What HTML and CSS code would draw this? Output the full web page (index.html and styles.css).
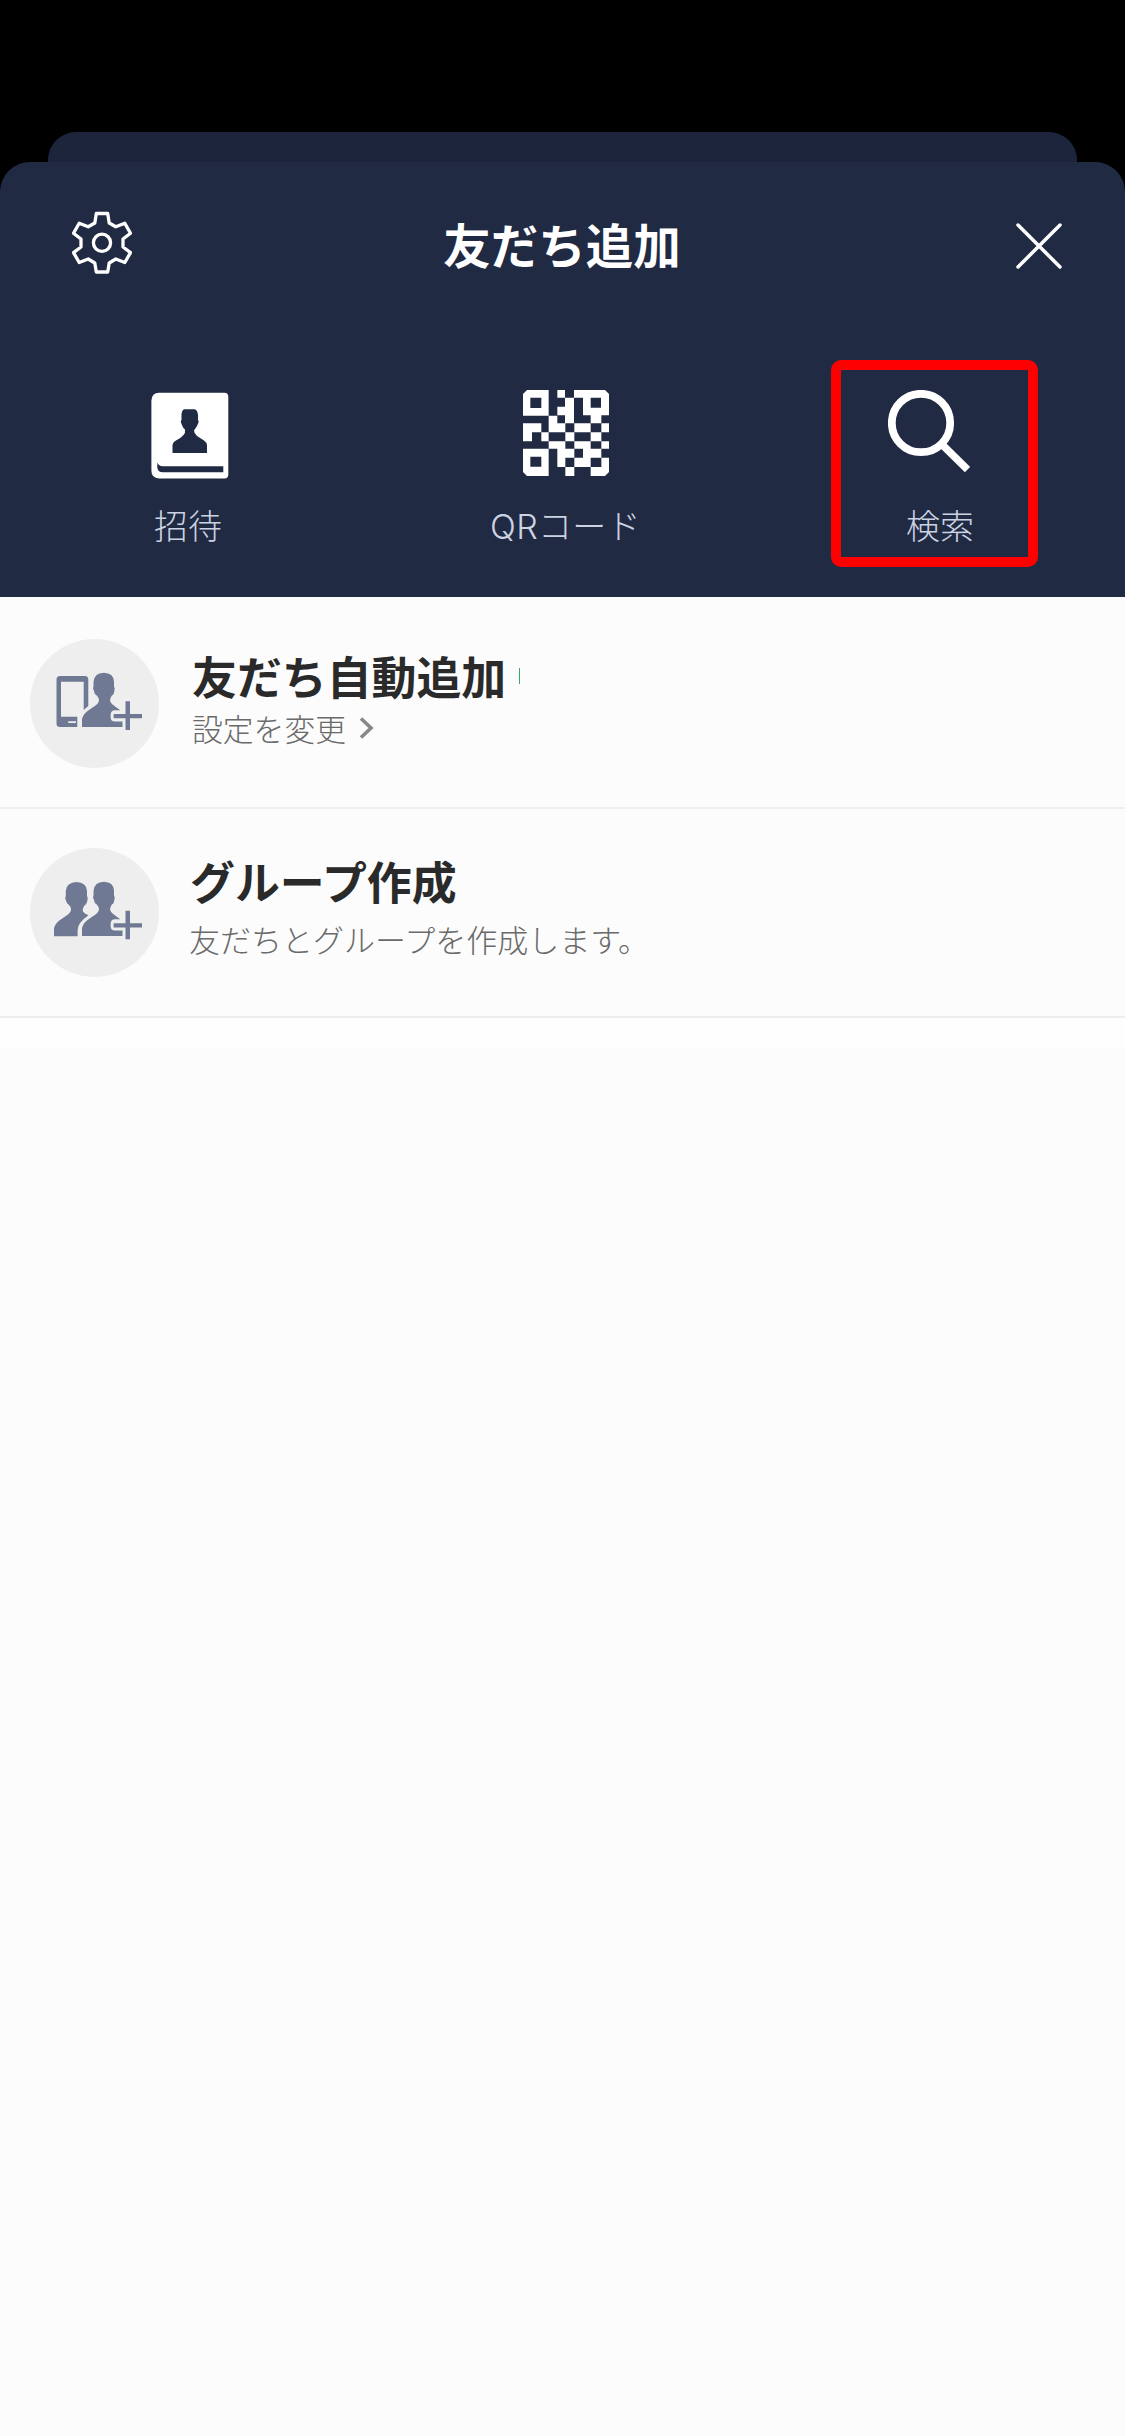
FILE: index.html
```
<!DOCTYPE html>
<html lang="ja">
<head>
<meta charset="utf-8">
<title>友だち追加</title>
<link rel="stylesheet" href="styles.css">
</head>
<body>
<div class="screen">
  <div class="back-sheet"></div>
  <main class="sheet">
    <header class="header">
      <div class="titlebar">
        <svg class="gear" width="60" height="64" viewBox="0 0 60 64" fill="none" stroke="#fff" stroke-width="3.300" stroke-linejoin="round">
          <path d="M24.3 3.5H35.7L37.2 13L43.8 16.8L52.8 13.2L58.5 23.2L51 29V37L58.5 42.6L52.8 52.5L43.8 49L37.2 53L35.7 62H24.3L22.8 53L16.2 49L7.2 52.5L1.5 42.6L9 37V29L1.5 23.2L7.2 13.2L16.2 16.8L22.8 13Z"/>
          <circle cx="30" cy="32.8" r="8.6"/>
        </svg>
        <h1 class="title">友だち追加</h1>
        <svg class="close" width="46" height="46" viewBox="0 0 46 46" stroke="#fff" stroke-width="3.500" stroke-linecap="round"><path d="M2 2L44 44M44 2L2 44"/></svg>
      </div>
      <nav class="actions">
        <div class="action invite">
          <svg class="action-icon" width="78" height="88" viewBox="0 0 78 88">
            <path fill="#fff" fill-rule="evenodd" d="M8 .8H73.500Q77.300.8 77.300 4.600V82.600Q77.300 86.500 73.500 86.500H8Q.4 86 .4 78.800V8.500Q.8 1 8 .8ZM33 17.300Q30.200 19 30.500 24.500V28Q29.400 28.500 30 30.500L30.900 33Q32 36 34 37.500Q34.600 41 32.500 43Q30 46 25 48.500Q21.500 50.500 21.500 53.500V61H56V53.500Q56 50.500 53 48.500L46 44Q43 41.500 43 38.500L46 34L47.500 30.500Q48 28.500 47 28V23Q46.500 17.800 43.500 17.300ZM6.300 70.500V75Q6.300 80.300 12 80.300H72.300V74.300H12Q7.500 74 6.300 70.500Z"/>
          </svg>
          <span class="label">招待</span>
        </div>
        <div class="action qr">
          <svg class="action-icon" width="86" height="86" viewBox="40 29 258 258" fill="#fff">
            <path fill-rule="evenodd" d="M52 29H117V106H40V41ZM62 52V83H95V52ZM40 205H117V287H52L40 275ZM62 229V259H95V229Z"/>
            <path fill-rule="evenodd" d="M193 29H286L298 41V105H275V129H243V105H220V52H193ZM243 52V82H274V52Z"/>
            <path d="M143 29H166V52H143ZM166 52H193V129H166V105H143V79H166ZM40 129H95V156H67V183H40ZM95 156H117V183H95ZM117 106H143V129H167V156H117ZM194 129H243V156H194ZM275 129H298V156H275ZM167 156H194V183H167ZM243 156H275V183H243ZM117 183H167V205H194V232H167V260H143V205H117ZM194 183H243V205H275V232H243V260H194V232H220V205H194ZM275 183H298V205H275ZM167 260H194V287H167ZM275 232H298V275L286 287H243V260H275Z"/>
          </svg>
          <span class="label">QRコード</span>
        </div>
        <div class="action search">
          <svg class="action-icon" width="82" height="84" viewBox="0 0 82 84" fill="none" stroke="#fff"><circle cx="33" cy="33" r="29.200" stroke-width="7.800"/><path stroke-width="7.400" d="M54 54.500L79.500 79.500"/></svg>
          <span class="label">検索</span>
        </div>
      </nav>
      <div class="highlight"></div>
    </header>
    <section class="list">
      <div class="row row-auto">
        <div class="avatar">
          <svg width="129" height="129" viewBox="0 0 129 129" fill="#6f7993">
            <path fill-rule="evenodd" d="M30 37H55Q58.300 37 58.300 40.500V67L53.700 71V42.700H31V77.700H47.300V88H30Q26.500 88 26.500 84.500V40.500Q26.500 37 30 37ZM39 82.300Q36.500 83 39 84H46V82.300Z"/>
            <path d="M73.800 33.700Q83.500 34 84 42.500V47.500Q85.300 49 84.300 52Q83.800 56 81.800 56.500Q79.800 59.500 80.200 62.500Q81.500 65.500 85.500 67.800L90.300 71.300H85Q80.600 71.300 80.600 76V78Q80.600 82.500 85 82.500H92.500V88H52V81Q52.300 76 57.500 72L65.500 66.500Q69.500 63.500 68.900 60.500Q68.500 58 66.700 56.500Q64.300 55.500 64 52Q62.300 49 63.500 47.500V43Q64 34 73.800 33.700Z"/>
            <path d="M95.500 62.300H100V75H112V79.200H100V91H95.500V79.200H83.600V75H95.500Z"/>
          </svg>
        </div>
        <div class="text">
          <h2 class="name">友だち自動追加<i class="marker"></i></h2>
          <p class="desc">設定を変更<svg class="chevron" width="16" height="22" viewBox="0 0 16 22" fill="none" stroke="#888" stroke-width="3.600"><path d="M2 1.500L12 11L2 20.500"/></svg></p>
        </div>
      </div>
      <div class="row row-group">
        <div class="avatar">
          <svg width="129" height="129" viewBox="0 0 129 129" fill="#6f7993">
            <path d="M46.500 34Q56.500 34.300 57 43V48Q58.500 50 57.300 53Q56.500 56.500 54.500 57.500Q52 61 53 63.500Q54 65.500 58.500 67.300Q47.600 75 47.600 82V88.300H24V81Q24.500 76 30 72L38 66.500Q41.500 63.500 41 60.500Q40.500 58 39 57Q36.500 56 36 52.500Q34.500 49.500 35.800 48V43Q36.500 34.300 46.500 34Z"/>
            <path d="M73.800 33.700Q83.500 34 84 42.500V47.500Q85.300 49 84.300 52Q83.800 56 81.800 56.500Q79.800 59.500 80.200 62.500Q81.500 65.500 85.500 67.800L90.300 71.300H85Q80.600 71.300 80.600 76V78Q80.600 82.500 85 82.500H92.500V88H52V81Q52.300 76 57.500 72L65.500 66.500Q69.500 63.500 68.900 60.500Q68.500 58 66.700 56.500Q64.300 55.500 64 52Q62.300 49 63.500 47.500V43Q64 34 73.800 33.700Z"/>
            <path d="M95.500 62.800H100V75.300H112V79.400H100V91.300H95.500V79.400H83.600V75.300H95.500Z"/>
          </svg>
        </div>
        <div class="text">
          <h2 class="name">グループ作成</h2>
          <p class="desc">友だちとグループを作成します。</p>
        </div>
      </div>
      <div class="spacer"></div>
    </section>
  </main>
</div>
</body>
</html>
```
FILE: styles.css
```
* { box-sizing: border-box; }
body {
  margin: 0;
  background: #000;
  font-family: "Noto Sans CJK JP", sans-serif;
}
h1, h2, p { margin: 0; }
svg { display: block; flex: none; }
.screen {
  width: 1125px;
  height: 2436px;
  padding-top: 132px;
  display: flex;
  flex-direction: column;
  background: #000;
  overflow: hidden;
}
.back-sheet {
  height: 30px;
  margin: 0 48px;
  border-radius: 28px 28px 0 0;
  background: #1d253d;
}
.sheet {
  flex: 1;
  display: flex;
  flex-direction: column;
}
.header {
  position: relative;
  height: 435px;
  border-radius: 30px 30px 0 0;
  background: #212a43;
}
.titlebar {
  height: 168px;
  padding: 0 63px 0 72px;
  display: flex;
  justify-content: space-between;
  align-items: center;
}
.gear { margin-bottom: 9px; }
.title {
  color: #fff;
  font-size: 47.5px;
  line-height: 70px;
  font-weight: 700;
  padding: 0 24px 4px 0;
}
.actions {
  display: grid;
  grid-template-columns: repeat(3, 375px);
  padding-top: 60px;
}
.action {
  display: flex;
  flex-direction: column;
  align-items: center;
}
.action-icon { margin-bottom: 26px; }
.invite .action-icon { margin: 2px 0 22px 5px; }
.qr .action-icon { margin-left: 7px; }
.search .action-icon { margin: 0 17px 28px 0; }
.label {
  font-family: Inter, "Noto Sans CJK JP", sans-serif;
  font-size: 34px;
  line-height: 50px;
  font-weight: 300;
  color: #cbd2e2;
}
.invite .label { margin-left: 1px; }
.search .label { margin-left: 5px; }
.qr .label {
  margin-left: 6px;
  letter-spacing: 0.3px;
}
.highlight {
  position: absolute;
  left: 831px;
  top: 198px;
  width: 207px;
  height: 207px;
  border-radius: 10px;
  border: 10px solid #f00;
}
.list {
  flex: 1;
  background: #fcfcfc;
}
.row {
  display: flex;
  padding-left: 30px;
  border-bottom: 2px solid #eee;
}
.row-auto { height: 212px; padding-top: 42px; }
.row-group { height: 209px; padding-top: 39px; }
.avatar {
  width: 129px;
  height: 129px;
  flex: none;
  border-radius: 50%;
  background: #eee;
}
.text { margin-left: 33px; }
.name {
  display: flex;
  align-items: center;
  font-size: 44.900px;
  line-height: 66px;
  font-weight: 700;
  color: #2a2a2a;
}
.marker {
  width: 1px;
  height: 16px;
  margin-left: 13px;
  background: #2fae68;
}
.desc {
  display: flex;
  align-items: center;
  font-size: 30.800px;
  line-height: 44px;
  font-weight: 300;
  color: #6a6a6a;
}
.row-auto .name { padding-top: 4px; }
.row-auto .desc { margin-top: -3px; }
.row-group .text { margin-left: 31px; }
.row-group .desc {
  margin: 3px 0 0 -1px;
  font-size: 31px;
}
.chevron { margin-left: 13px; }
.spacer { height: 29px; background: #fefefe; }
```
